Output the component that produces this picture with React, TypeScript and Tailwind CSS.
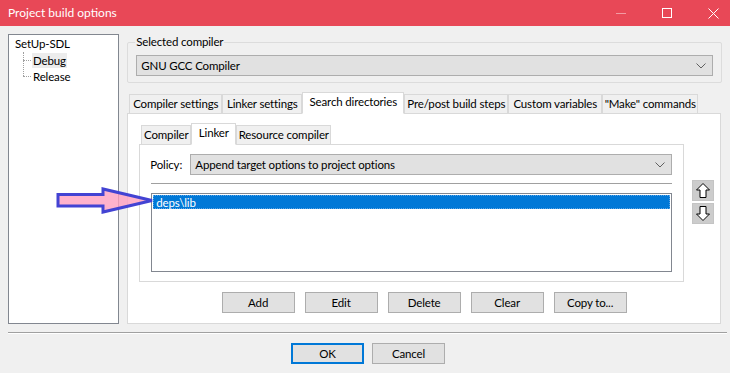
import React from "react";

const outerTabs = [
  { label: "Compiler settings", w: "w-[93px]" },
  { label: "Linker settings", w: "w-[80px]" },
  { label: "Search directories", w: "w-[102px]", active: true },
  { label: "Pre/post build steps", w: "w-[104px]" },
  { label: "Custom variables", w: "w-[94px]" },
  { label: "\"Make\" commands", w: "w-[96px]" },
];

const innerTabs = [
  { label: "Compiler", w: "w-[50px]" },
  { label: "Linker", w: "w-[45px]", active: true },
  { label: "Resource compiler", w: "w-[95px]" },
];

const Chevron = () => (
  <svg width="10" height="6" viewBox="0 0 10 6" className="shrink-0">
    <path d="M0.5 0.5 L5 5 L9.5 0.5" fill="none" stroke="#606060" strokeWidth="1" />
  </svg>
);

const Tab = ({ label, w, active }: { label: string; w: string; active?: boolean }) => (
  <div
    className={
      active
        ? `${w} h-[22px] bg-white border border-[#d9d9d9] border-b-white flex items-start justify-center pt-[1px] leading-[16px]`
        : `${w} h-[20px] bg-[#f0f0f0] border border-[#d9d9d9] flex items-center justify-center leading-[16px]`
    }
  >
    {label}
  </div>
);

const Btn = ({ label, primary }: { label: string; primary?: boolean }) => (
  <button
    className={
      primary
        ? "w-[73px] h-[21px] bg-[#e1e1e1] border-2 border-[#0078d7] leading-[16px]"
        : "w-[73px] h-[21px] bg-[#e1e1e1] border border-[#adadad] leading-[16px]"
    }
  >
    {label}
  </button>
);

const MoveBtn = ({ down }: { down?: boolean }) => (
  <div className="w-[22px] h-[21px] bg-[#cccccc] border border-[#c4c4c4] flex items-center justify-center">
    <svg width="16" height="17" viewBox="0 0 16 17" className={down ? "rotate-180" : ""}>
      <polygon
        points="8,1.5 14.5,8 11,8 11,15.5 5,15.5 5,8 1.5,8"
        fill="white"
        stroke="black"
        strokeWidth="1"
        strokeLinejoin="miter"
      />
    </svg>
  </div>
);

export default function App() {
  return (
    <div className="relative w-[730px] h-[373px] bg-[#f0f0f0] overflow-hidden whitespace-nowrap font-['Lato',sans-serif] text-[11.5px] tracking-[-0.15px] text-black flex flex-col">
      {/* title bar */}
      <div className="h-[26px] bg-[#e84857] flex items-center text-white shrink-0">
        <div className="pl-[8px] text-[12px] tracking-normal">Project build options</div>
        <div className="ml-auto flex mr-[-6px]">
          <div className="w-[46px] h-[26px] flex items-center justify-center">
            <div className="w-[10px] h-px bg-[#f29aa3]" />
          </div>
          <div className="w-[46px] h-[26px] flex items-center justify-center">
            <div className="w-[10px] h-[10px] border border-white" />
          </div>
          <div className="w-[46px] h-[26px] flex items-center justify-center">
            <svg width="11" height="11" viewBox="0 0 11 11">
              <path d="M0.5 0.5 L10.5 10.5 M10.5 0.5 L0.5 10.5" stroke="white" strokeWidth="1" />
            </svg>
          </div>
        </div>
      </div>

      {/* body */}
      <div className="flex px-[8px] pt-[8px] gap-[8px]">
        {/* tree */}
        <div className="w-[112px] h-[290px] bg-white border border-[#828790] pt-[1px] pl-[6px]">
          <div className="h-[16px] leading-[16px]">SetUp-SDL</div>
          <div className="relative pl-[8px]">
            <div className="absolute left-[8px] top-[0px] h-[24px] border-l border-dotted border-[#a0a0a0]" />
            <div className="flex items-center h-[16px]">
              <div className="w-[8px] border-t border-dotted border-[#a0a0a0]" />
              <span className="ml-[1px] px-[1px] bg-[#ececec] leading-[15px]">Debug</span>
            </div>
            <div className="flex items-center h-[16px]">
              <div className="w-[8px] border-t border-dotted border-[#a0a0a0]" />
              <span className="ml-[1px] px-[1px] leading-[15px]">Release</span>
            </div>
          </div>
        </div>

        {/* right column */}
        <div className="w-[599px] flex flex-col">
          <fieldset className="border border-[#dcdcdc] rounded-[2px] px-[8px] pb-[6px]">
            <legend className="px-[1px] ml-[-1px] leading-[16px]">Selected compiler</legend>
            <div className="mt-[5px] h-[21px] bg-[#e1e1e1] border border-[#adadad] flex items-center pl-[4px] pr-[6px]">
              <span className="flex-1">GNU GCC Compiler</span>
              <Chevron />
            </div>
          </fieldset>

          <div className="mt-[9px] pl-[2px] flex items-end -mb-px relative z-10">
            {outerTabs.map((t) => (
              <Tab key={t.label} {...t} />
            ))}
          </div>
          <div className="mr-[1px] h-[211px] bg-white border border-[#d9d9d9] pl-[11px] pt-[9px] flex flex-col">
            <div className="flex">
              <div className="flex flex-col">
                <div className="pl-[2px] flex items-end -mb-px relative z-10">
                  {innerTabs.map((t) => (
                    <Tab key={t.label} {...t} />
                  ))}
                </div>
                <div className="w-[545px] h-[138px] border border-[#d9d9d9] px-[11px] pt-[9px]">
                  <div className="flex items-center gap-[10px] -ml-px">
                    <span className="w-[30px]">Policy:</span>
                    <div className="flex-1 h-[21px] bg-[#e1e1e1] border border-[#adadad] flex items-center pl-[4px] pr-[6px]">
                      <span className="flex-1">Append target options to project options</span>
                      <Chevron />
                    </div>
                  </div>
                  <div className="mt-[8px] h-[2px] border-t border-[#a0a0a0] bg-white" />
                  <div className="mt-[8px] h-[79px] border border-[#828790] bg-white p-[1px]">
                    <div className="h-[14px] bg-[#0078d7] text-white leading-[13px] pl-[2px] border border-dotted border-[#5aa5e6]">
                      deps\lib
                    </div>
                  </div>
                </div>
              </div>
              <div className="ml-[8px] pt-[57px] flex flex-col gap-[2px]">
                <MoveBtn />
                <MoveBtn down />
              </div>
            </div>
            <div className="mt-[10px] flex justify-center gap-[10px] pr-[11px]">
              <Btn label="Add" />
              <Btn label="Edit" />
              <Btn label="Delete" />
              <Btn label="Clear" />
              <Btn label="Copy to..." />
            </div>
          </div>
        </div>
      </div>

      {/* separator */}
      <div className="mx-[8px] mt-[8px] w-[719px] h-[2px] border-t border-[#a0a0a0] bg-white" />

      <div className="mt-[9px] flex justify-center gap-[8px] pl-[6px]">
        <Btn label="OK" primary />
        <Btn label="Cancel" />
      </div>

      {/* annotation arrow */}
      <svg
        className="absolute left-[55px] top-[187px]"
        width="100"
        height="28"
        viewBox="0 0 100 28"
      >
        <polygon
          points="3,7.5 48,7.5 48,2 97,13.5 48,25 48,19 3,19"
          fill="#ff9fbf"
          fillOpacity="0.8"
          stroke="#4343d3"
          strokeWidth="3"
          strokeLinejoin="miter"
        />
      </svg>
    </div>
  );
}
